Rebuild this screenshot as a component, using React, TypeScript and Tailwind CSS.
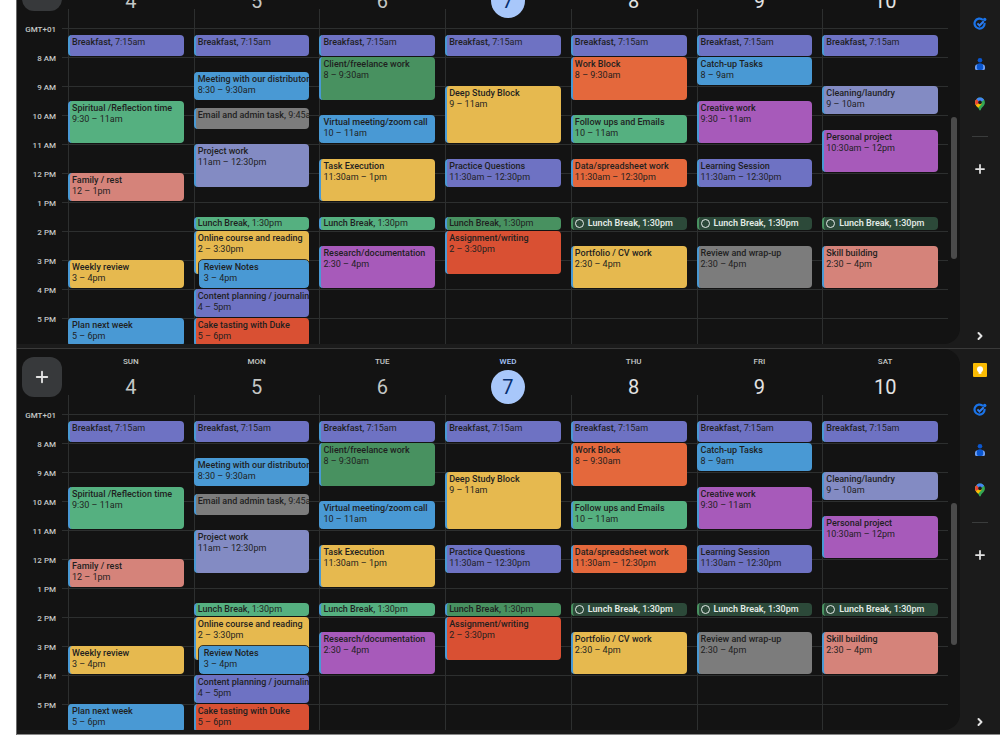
import { ChevronRight, Plus } from "lucide-react"

type CalendarEvent = {
  title: string
  time: string
  start: number
  end: number
  color: string
  inline?: boolean
  task?: boolean
  nested?: boolean
}

const COLORS = {
  blueberry: "bg-[#6e72c3] border-[#4999d4]",
  sage: "bg-[#55b080] border-[#4999d4]",
  basil: "bg-[#489160] border-[#4999d4]",
  peacock: "bg-[#4999d4] border-[#4999d4]",
  banana: "bg-[#e6b94f] border-[#4999d4]",
  tangerine: "bg-[#e4683c] border-[#4999d4]",
  tomato: "bg-[#d95033] border-[#4999d4]",
  grape: "bg-[#a75aba] border-[#4999d4]",
  graphite: "bg-[#7c7c7c] border-[#4999d4]",
  lavender: "bg-[#838bc3] border-[#4999d4]",
  flamingo: "bg-[#d5837a] border-[#4999d4]",
  task: "bg-[#2c4939] border-[#489160]",
}

const BREAKFAST: CalendarEvent = {
  title: "Breakfast",
  time: "7:15am",
  start: 7.25,
  end: 8,
  color: COLORS.blueberry,
  inline: true,
}

const lunch = (color: string, task = false): CalendarEvent => ({
  title: "Lunch Break",
  time: "1:30pm",
  start: 13.5,
  end: 14,
  color,
  inline: true,
  task,
})

const DAYS: { name: string; date: number; today?: boolean; past?: boolean; events: CalendarEvent[] }[] = [
  {
    name: "SUN",
    date: 4,
    past: true,
    events: [
      BREAKFAST,
      { title: "Spiritual /Reflection time", time: "9:30 – 11am", start: 9.5, end: 11, color: COLORS.sage },
      { title: "Family / rest", time: "12 – 1pm", start: 12, end: 13, color: COLORS.flamingo },
      { title: "Weekly review", time: "3 – 4pm", start: 15, end: 16, color: COLORS.banana },
      { title: "Plan next week", time: "5 – 6pm", start: 17, end: 18, color: COLORS.peacock },
    ],
  },
  {
    name: "MON",
    date: 5,
    past: true,
    events: [
      BREAKFAST,
      { title: "Meeting with our distributors", time: "8:30 – 9:30am", start: 8.5, end: 9.5, color: COLORS.peacock },
      { title: "Email and admin task", time: "9:45am", start: 9.75, end: 10.5, color: COLORS.graphite, inline: true },
      { title: "Project work", time: "11am – 12:30pm", start: 11, end: 12.5, color: COLORS.lavender },
      lunch(COLORS.sage),
      { title: "Online course and reading", time: "2 – 3:30pm", start: 14, end: 15.5, color: COLORS.banana },
      { title: "Review Notes", time: "3 – 4pm", start: 15, end: 16, color: COLORS.peacock, nested: true },
      { title: "Content planning / journaling", time: "4 – 5pm", start: 16, end: 17, color: COLORS.blueberry },
      { title: "Cake tasting with Duke", time: "5 – 6pm", start: 17, end: 18, color: COLORS.tomato },
    ],
  },
  {
    name: "TUE",
    date: 6,
    past: true,
    events: [
      BREAKFAST,
      { title: "Client/freelance work", time: "8 – 9:30am", start: 8, end: 9.5, color: COLORS.basil },
      { title: "Virtual meeting/zoom call", time: "10 – 11am", start: 10, end: 11, color: COLORS.peacock },
      { title: "Task Execution", time: "11:30am – 1pm", start: 11.5, end: 13, color: COLORS.banana },
      lunch(COLORS.sage),
      { title: "Research/documentation", time: "2:30 – 4pm", start: 14.5, end: 16, color: COLORS.grape },
    ],
  },
  {
    name: "WED",
    date: 7,
    today: true,
    events: [
      BREAKFAST,
      { title: "Deep Study Block", time: "9 – 11am", start: 9, end: 11, color: COLORS.banana },
      { title: "Practice Questions", time: "11:30am – 12:30pm", start: 11.5, end: 12.5, color: COLORS.blueberry },
      lunch(COLORS.basil),
      { title: "Assignment/writing", time: "2 – 3:30pm", start: 14, end: 15.5, color: COLORS.tomato },
    ],
  },
  {
    name: "THU",
    date: 8,
    events: [
      BREAKFAST,
      { title: "Work Block", time: "8 – 9:30am", start: 8, end: 9.5, color: COLORS.tangerine },
      { title: "Follow ups and Emails", time: "10 – 11am", start: 10, end: 11, color: COLORS.sage },
      { title: "Data/spreadsheet work", time: "11:30am – 12:30pm", start: 11.5, end: 12.5, color: COLORS.tangerine },
      lunch(COLORS.task, true),
      { title: "Portfolio / CV work", time: "2:30 – 4pm", start: 14.5, end: 16, color: COLORS.banana },
    ],
  },
  {
    name: "FRI",
    date: 9,
    events: [
      BREAKFAST,
      { title: "Catch-up Tasks", time: "8 – 9am", start: 8, end: 9, color: COLORS.peacock },
      { title: "Creative work", time: "9:30 – 11am", start: 9.5, end: 11, color: COLORS.grape },
      { title: "Learning Session", time: "11:30am – 12:30pm", start: 11.5, end: 12.5, color: COLORS.blueberry },
      lunch(COLORS.task, true),
      { title: "Review and wrap-up", time: "2:30 – 4pm", start: 14.5, end: 16, color: COLORS.graphite },
    ],
  },
  {
    name: "SAT",
    date: 10,
    events: [
      BREAKFAST,
      { title: "Cleaning/laundry", time: "9 – 10am", start: 9, end: 10, color: COLORS.lavender },
      { title: "Personal project", time: "10:30am – 12pm", start: 10.5, end: 12, color: COLORS.grape },
      lunch(COLORS.task, true),
      { title: "Skill building", time: "2:30 – 4pm", start: 14.5, end: 16, color: COLORS.flamingo },
    ],
  },
]

const HOURS = ["GMT+01", "8 AM", "9 AM", "10 AM", "11 AM", "12 PM", "1 PM", "2 PM", "3 PM", "4 PM", "5 PM"]

const FIRST_HOUR = 7

// grid lines are 15 minutes apart
const slot = (hour: number) => (hour - FIRST_HOUR) * 4 + 1

function EventCard({ event }: { event: CalendarEvent }) {
  const { title, time, start, end, color, inline, task, nested } = event
  const short = end - start <= 0.5
  return (
    <button
      type="button"
      className={`col-start-1 mb-px mr-[10px] flex min-w-0 flex-col items-start justify-start overflow-hidden whitespace-nowrap rounded border-l-2 text-left text-[9px] leading-[11px] ${color} ${
        short ? "pt-px" : "pt-[2px]"
      } ${task ? "text-[#e3ebe6]" : "text-[#1f1f1f]"} ${
        nested ? "relative ml-[5px] pl-[3px] outline outline-[#131313]/80" : "pl-[2px]"
      }`}
      style={{ gridRow: `${slot(start)} / ${slot(end)}` }}
    >
      {inline ? (
        <span className="flex items-center">
          {task && <span className="mr-1 size-[9px] rounded-full border border-current" />}
          <span className={task ? "font-semibold" : "font-medium"}>{title},&nbsp;</span>
          <span className={task ? "font-medium" : ""}>{time}</span>
        </span>
      ) : (
        <>
          <span className="font-medium">{title}</span>
          <span>{time}</span>
        </>
      )}
    </button>
  )
}

function KeepIcon() {
  return (
    <svg viewBox="0 0 14 14" className="size-[14px]">
      <rect width="14" height="14" rx="1" fill="#fbbc04" />
      <circle cx="7" cy="6.2" r="3" fill="#fff" />
      <path d="M5.6 8h2.8v2.8H5.6z" fill="#fff" />
    </svg>
  )
}

function TasksIcon() {
  return (
    <svg viewBox="0 0 14 14" className="size-[14px]" fill="none">
      <path d="M10 3A5 5 0 1 0 11.5 6" stroke="#1a73e8" strokeWidth="2.2" />
      <path d="M4.4 6.4 6.5 8.5 10.8 4.2" stroke="#2f7df0" strokeWidth="2" />
      <circle cx="11.7" cy="2.5" r="1.7" fill="#1a73e8" />
    </svg>
  )
}

function ContactsIcon() {
  return (
    <svg viewBox="0 0 14 14" className="size-[14px]">
      <path d="M2 10.2A3 3 0 0 1 5 7.2h4a3 3 0 0 1 3 3v1.3a1.5 1.5 0 0 1-1.5 1.5h-7A1.5 1.5 0 0 1 2 11.5z" fill="#6fa0f6" />
      <path d="M3.8 9.4A3.2 3.2 0 0 1 10.2 9.4V11a2 2 0 0 1-2 2H5.8a2 2 0 0 1-2-2z" fill="#0b57d0" />
      <circle cx="7" cy="3.2" r="2.3" fill="#0b57d0" />
    </svg>
  )
}

function MapsIcon() {
  return (
    <svg viewBox="0 0 14 14" className="size-[14px]">
      <clipPath id="pin">
        <path d="M7 .5a4.9 4.9 0 0 0-4.9 4.9C2.1 9 5.6 9.8 6.3 13a.75.75 0 0 0 1.4 0C8.4 9.8 11.9 9 11.9 5.4A4.9 4.9 0 0 0 7 .5z" />
      </clipPath>
      <g clipPath="url(#pin)">
        <path d="M0 0h14v14H0z" fill="#34a853" />
        <path d="M7 5.4 0 13V4l3-1z" fill="#fbbc04" />
        <path d="M7 5.4 2 8.5 0 4l3.2-2.5z" fill="#ea4335" />
        <path d="M7 5.4 3 1.8 5 0h7l.5 2L7 5.4z" fill="#4285f4" />
        <path d="M2 9.8 7 5.4 9 6.4 5 11z" fill="#fbbc04" />
      </g>
      <circle cx="7" cy="5.4" r="1.8" fill="#1b1b1b" />
    </svg>
  )
}

const APPS = [
  { name: "Keep", Icon: KeepIcon },
  { name: "Tasks", Icon: TasksIcon },
  { name: "Contacts", Icon: ContactsIcon },
  { name: "Maps", Icon: MapsIcon },
]

function SidePanel() {
  return (
    <aside className="flex w-10 shrink-0 flex-col items-center pt-px text-[#e3e3e3]">
      {APPS.map(({ name, Icon }) => (
        <button key={name} type="button" aria-label={name} className="flex size-10 items-center justify-center">
          <Icon />
        </button>
      ))}
      <hr className="my-3 w-4 border-[#3a3c3c]" />
      <button type="button" aria-label="Get add-ons" className="flex size-10 items-center justify-center">
        <Plus className="size-[14px]" strokeWidth={3} />
      </button>
      <button type="button" aria-label="Hide side panel" className="mt-auto flex size-6 items-center justify-center">
        <ChevronRight className="size-3" strokeWidth={4} />
      </button>
    </aside>
  )
}

function WeekHeader() {
  return (
    <header className="relative z-10 flex h-[46px] pr-3">
      <div className="w-[51px] shrink-0 pl-[5px] pt-2">
        <button
          type="button"
          aria-label="Create"
          className="flex size-10 items-center justify-center rounded-xl bg-[#37393b] text-[#e3e3e3]"
        >
          <Plus className="size-[18px]" strokeWidth={2.5} />
        </button>
      </div>
      <div className="grid flex-1 grid-cols-7">
        {DAYS.map(({ name, date, today, past }) => (
          <div key={name} className="flex flex-col items-center pt-[7px]">
            <span className={`text-[8px] font-medium leading-[11px] ${today ? "text-[#a8c7fa]" : "text-[#c4c7c5]"}`}>
              {name}
            </span>
            <span
              className={`mt-[3px] flex size-[34px] shrink-0 items-center justify-center rounded-full text-xl leading-none ${
                today ? "bg-[#a8c7fa] text-[#062e6f]" : past ? "text-[#c4c7c5]" : "text-[#e3e3e3]"
              }`}
            >
              {date}
            </span>
          </div>
        ))}
      </div>
    </header>
  )
}

function WeekGrid() {
  return (
    <div className="grid min-h-0 flex-1 overflow-hidden">
      <div className="col-start-1 row-start-1 pr-3 pt-[19px]">
        {HOURS.map((hour) => (
          <div key={hour} className="flex h-[29px]">
            <span className="-mt-1 w-[39px] text-right text-[8px] font-medium leading-[12px] text-[#c4c7c5]">
              {hour}
            </span>
            <div className="ml-[6px] flex-1 border-t border-[#2d2f2f]" />
          </div>
        ))}
      </div>
      <div className="col-start-1 row-start-1 ml-[51px] mr-3 grid grid-cols-7">
        {DAYS.map(({ name, events }) => (
          <div key={name} className="min-w-0 border-l border-[#2d2f2f] pt-[19px]">
            <div className="-ml-px grid h-[319px] grid-cols-1 grid-rows-[repeat(44,minmax(0,1fr))]">
              {events.map((event) => (
                <EventCard key={event.title} event={event} />
              ))}
            </div>
          </div>
        ))}
      </div>
    </div>
  )
}

function Week() {
  return (
    <section className="flex h-[386px] border-b border-[#3a3a3a] bg-[#1b1b1b] last:border-[#8a8a8a]">
      <div className="mb-1 flex min-w-0 flex-1 rounded-r-2xl bg-[#131313]">
        <div className="flex min-w-0 flex-1 flex-col">
          <WeekHeader />
          <WeekGrid />
        </div>
        <div className="-ml-[9px] mr-[3px] mt-[154px] h-[142px] w-[6px] rounded-full bg-[#4a4a4a]" />
      </div>
      <SidePanel />
    </section>
  )
}

export default function App() {
  return (
    <main className="h-screen overflow-hidden bg-white pl-4 font-['Roboto',sans-serif]">
      <div className="-mt-[37px] border-l border-[#6b6b6b]">
        <Week />
        <Week />
      </div>
    </main>
  )
}
